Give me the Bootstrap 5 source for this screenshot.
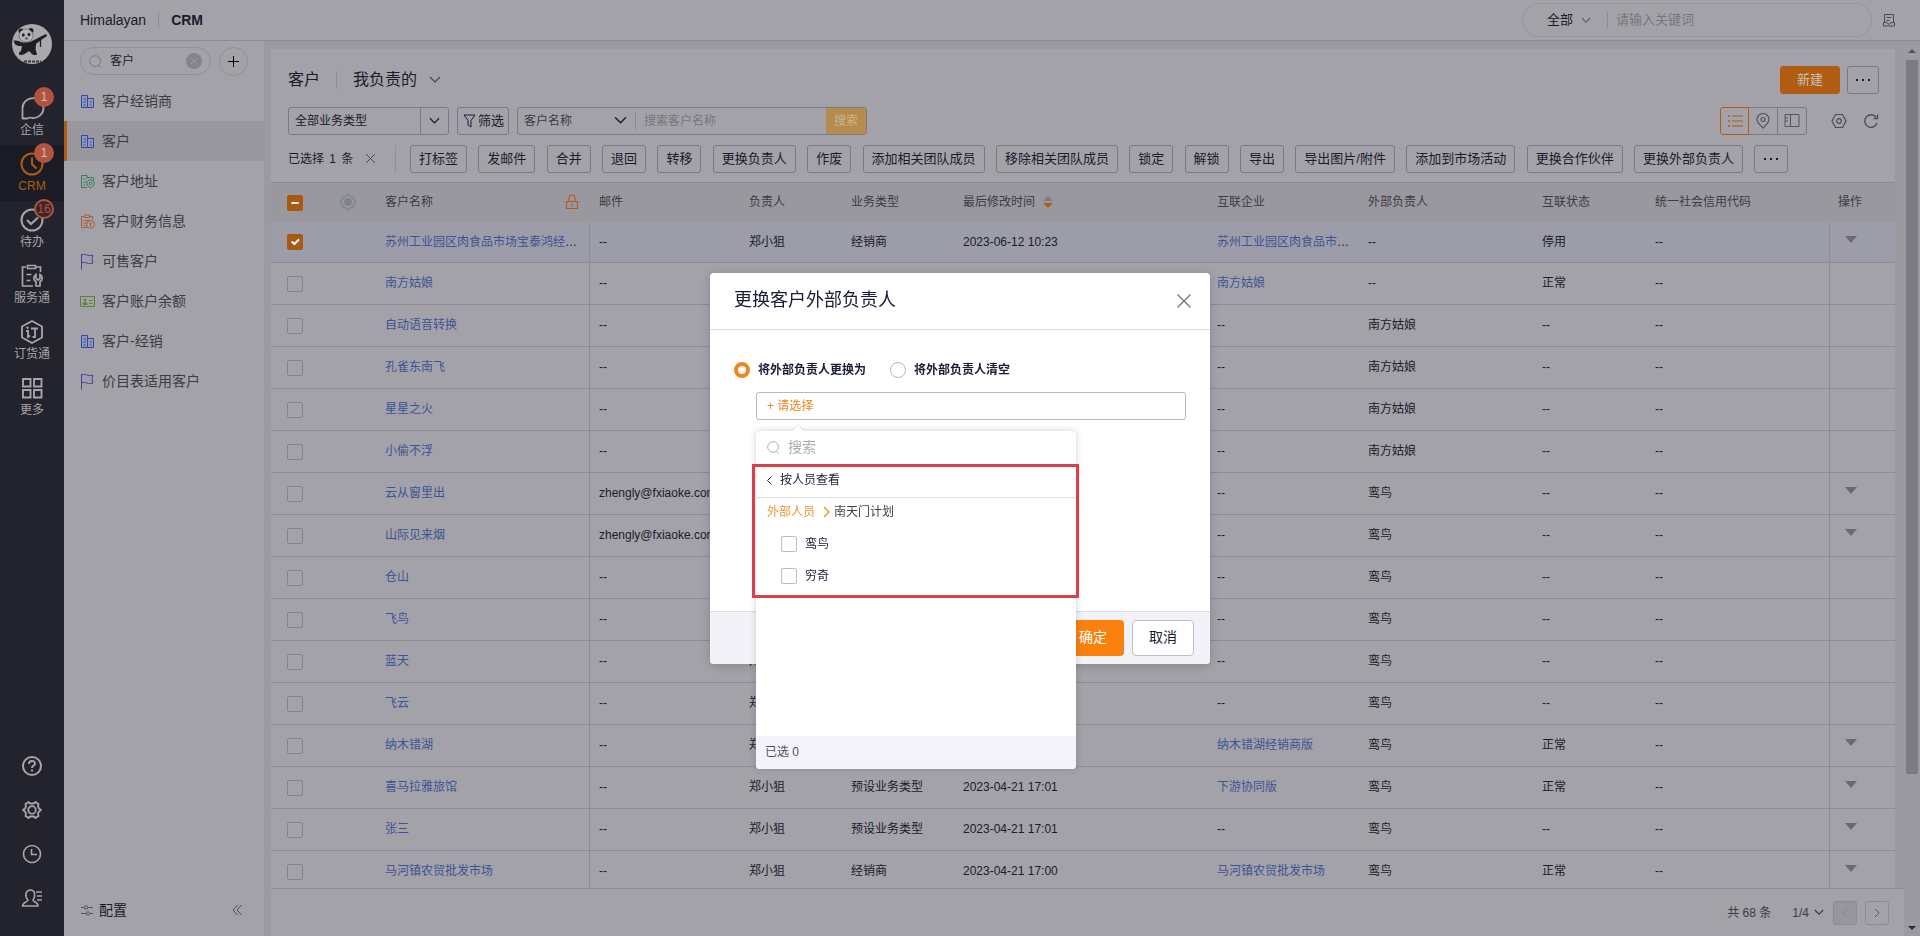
<!DOCTYPE html>
<html lang="zh-CN">
<head>
<meta charset="utf-8">
<meta name="viewport" content="width=device-width, initial-scale=1">
<title>CRM - 客户</title>
<link href="https://cdn.jsdelivr.net/npm/bootstrap@5.3.0/dist/css/bootstrap.min.css" rel="stylesheet">
<style>
:root{--surface:#a3a2a8;--gutter:#9b9aa0;--line:#8d8c93;--edge:#7b7a82;--ink:#1a1b2c;--ink-soft:#3b3b46;--mute:#77767e;--brand:#b05d12;--link:#3c5396;--rail:#22232d;--rail-ink:#a6a6aa}
body{font-family:"Liberation Sans","Noto Sans CJK SC",sans-serif;font-size:12px;line-height:18px;color:var(--ink);background:var(--gutter)}
svg{display:block;fill:none;flex:none}
svg:not([stroke]){stroke:currentColor}
a{text-decoration:none}
button{font-family:inherit}
input::placeholder{color:var(--mute)!important;opacity:1}

/* icon rail */
.rail{width:64px;background:var(--rail);color:var(--rail-ink)}
.rail a{color:inherit}
.rail-item{height:56px;padding-top:6px}
.rail-item.current{background:#1b1b25;color:var(--brand)!important}
.rail-badge{position:absolute;top:-2px;left:34px;min-width:20px;height:20px;border-radius:10px;background:#b2533d;color:#c4c0c0;line-height:20px;text-align:center;font-size:12px}
.rail-badge.ring{background:#3a262c;border:2px solid #b2533d;color:#b2533d;line-height:16px}
.rail-tool{height:44px}

/* header bar */
.topbar{height:41px;background:var(--surface);border-bottom:1px solid var(--line);font-size:14px}
.vline{width:1px;background:var(--line)}
.global-search{width:350px;height:34px;border:1px solid #96959c;border-radius:17px;font-size:13px}
.bare{border:0;background:transparent;outline:0;padding:0;min-width:0;color:var(--ink)}

/* object menu */
.side{width:200px;background:var(--surface);margin-right:7px;font-size:14px}
.side-search{height:28px;border:1px solid #918f97;border-radius:14px;font-size:13px}
.round-btn{width:29px;height:29px;border:1px solid #918f97;border-radius:50%;background:transparent;padding:0}
.side-link{height:40px;padding:0 16px;gap:7px;color:var(--ink-soft)}
.side-link.current{background:#98979d;box-shadow:inset 3px 0 var(--brand)}

/* list page */
.page{background:var(--surface)}
.bar{padding:0 16px 0 17px}
.tool{height:28px;border:1px solid var(--edge);border-radius:3px;background:transparent;color:var(--ink);padding:0 8px;font-size:13px;line-height:26px;white-space:nowrap}
.tool.solid{background:var(--brand);border-color:var(--brand);color:#c8c0b8}
.tool.dots{width:34px;padding:0;vertical-align:top}
.bulk .tool{margin-right:8px}
.combo{height:28px;border:1px solid var(--edge);border-radius:3px}
.combo select{appearance:none}
.search-btn{width:40px;border:0;background:#b58c4b;color:#c9b48f;font-size:12px;border-radius:0 2px 2px 0}
.view{width:29px;height:28px;border:1px solid var(--edge);margin-left:-1px;background:transparent;color:#55545c;padding:0}
.view.current{border-color:var(--brand);color:var(--brand);z-index:1;border-radius:3px 0 0 3px}
.icon-btn{border:0;background:transparent;padding:0;color:#4c4b53}

.grid{table-layout:fixed;width:100%;border-collapse:separate;border-spacing:0}
.grid th{height:40px;background:#99989e;font-weight:400;color:var(--ink-soft);padding:0 0 0 9px;border-top:1px solid var(--line)}
.grid td{height:42px;padding:0 0 0 9px;border-bottom:1px solid var(--line);white-space:nowrap;overflow:hidden;text-overflow:ellipsis}
.grid tr:first-child td{height:41px}
.grid tr.picked td{background:#9c9da8}
.grid td a{color:var(--link)}
.grid .pin{border-right:1px solid var(--line)}
.grid td.act{border-left:1px solid var(--line)}
.grid .mid{padding-left:0;text-align:center}
.caret{display:block;width:0;margin:-5px 0 0 6px;border:6px solid transparent;border-top:7px solid #6b6a72;border-bottom:0}
.tick.form-check-input{width:16px;height:16px;margin:0;border:1px solid #85848b;border-radius:2px;background-color:transparent;box-shadow:none;vertical-align:middle}
.grid .tick:checked,.grid .tick:indeterminate{background-color:var(--brand)!important;border-color:var(--brand)!important;filter:brightness(.96)}
.drop .tick.form-check-input{border-color:#bdbdc4}
.pager{height:48px;background:var(--surface);border-top:1px solid var(--line);color:var(--ink-soft)}
.pager button{width:24px;height:24px;border:1px solid #8b8a91;border-radius:3px;background:transparent;padding:0;color:#5c5b63}
.scroll{width:16px;padding:0 2px}
.scroll-thumb{background:#7c7b81;flex:0 0 714px}

/* dialog */
.swap .modal-dialog{max-width:500px}
.swap .modal-content{border:0;border-radius:4px;box-shadow:0 2px 10px rgba(0,0,0,.18);color:#181c35}
.swap .modal-header{height:57px;padding:0 19px 0 24px;border-bottom:1px solid #dcdce2}
.swap .modal-body{min-height:281px;padding:31px 24px 0}
.swap .modal-footer{height:53px;padding:0 16px;gap:8px;background:#f3f2f8;border-top:1px solid #dcdce2;border-radius:0 0 4px 4px}
.swap .modal-footer .btn{width:62px;height:36px;margin:0;padding:0;font-size:14px;border-radius:4px}
.btn-ok{background:#fa810d;color:#fff}
.btn-no{background:#fff;border:1px solid #bfbdc6;color:#181c35}
.pick.form-check-input{width:16px;height:16px;margin:0;border:1px solid #b5b5bd;box-shadow:none}
.pick.form-check-input:checked{background:#fff;border:4px solid #f08519}
.chooser{width:430px;height:28px;margin:13px 0 0 22px;border:1px solid #b8b8be;border-radius:3px;background:#fff;color:#ec8420;font-size:12px;padding:0 10px}
.drop{position:absolute;top:101px;left:46px;width:320px;height:338px;background:#fff;border-radius:4px;box-shadow:0 0 6px rgba(60,60,80,.25);z-index:5}
.drop::before{content:"";position:absolute;top:-4px;left:38px;width:8px;height:8px;background:#fff;transform:rotate(45deg);box-shadow:-1px -1px 1px rgba(60,60,80,.12)}
.drop-search{height:33px;padding:0 11px;color:#a9a9b2}
.drop-search input::placeholder{color:#a9a9b2!important}
.marked{position:relative;height:134px}
.marked::after{content:"";position:absolute;inset:0 -3px 0 -4px;border:3px solid #d9414a;pointer-events:none}
.back{height:34px;border:0;border-bottom:1px solid #dedee3;background:transparent;padding:0 11px;color:#181c35}
.trail{height:28px;padding:0 11px;margin-bottom:2px}
.person{height:32px;padding:0 25px}
.drop-foot{height:33px;padding:0 9px;background:#f4f3fb;color:#50505e;border-radius:0 0 4px 4px}
</style>
</head>
<body class="vh-100 d-flex overflow-hidden">

<svg class="d-none">
  <symbol id="i-build" viewBox="0 0 15 15"><path fill="#8f98bb" stroke="none" d="M1 1h7v13H1zM8 4h5.500v10H8z"/><path d="M1.500 1.500h6v12h-6zM8 4.500h5.500v9H8M3.500 5h2.500M3.500 8h2.500M3.500 11h2M10 8h1.500M10 11h1.500"/></symbol>
  <symbol id="i-flag" viewBox="0 0 15 17"><path fill="#a09cb5" stroke="none" d="M2 2c4-2 6 2 11 0l-1 4 1 4c-5 2-7-2-11 0z"/><path d="M1.500 1v15.500M1.500 2c4-2 6 2 11.500 0l-1 4 1 4c-5 2-7-2-11.500 0"/></symbol>
  <symbol id="i-down" viewBox="0 0 12 8"><path d="M1 1l5 5 5-5" stroke-width="1.300"/></symbol>
  <symbol id="i-find" viewBox="0 0 14 14"><circle cx="6.500" cy="6.500" r="5.800"/><path d="M10 11l3 2.500"/></symbol>
  <symbol id="i-dots" viewBox="0 0 14 4"><path stroke="none" fill="currentColor" d="M0 1h2v2H0zM6 1h2v2H6zM12 1h2v2h-2z"/></symbol>
</svg>

<nav class="rail d-flex flex-column flex-shrink-0">
  <svg class="mx-auto mb-4" style="margin-top:24px" width="40" height="40" viewBox="0 0 40 40" stroke="none">
    <clipPath id="round"><circle cx="20" cy="20" r="20"/></clipPath>
    <g clip-path="url(#round)"><rect width="40" height="40" fill="#a9a9ab"/>
    <circle cx="9" cy="7" r="2.500" fill="#1e1e24"/><circle cx="19" cy="6.500" r="2.500" fill="#1e1e24"/><ellipse cx="14" cy="11.500" rx="7" ry="6.500" fill="#b6b6b8" stroke="#55555b" stroke-width=".6"/>
    <ellipse cx="11.300" cy="11" rx="1.500" ry="1.800" fill="#25252b"/><ellipse cx="17" cy="10.500" rx="1.500" ry="1.800" fill="#25252b"/><ellipse cx="14.500" cy="14.500" rx="1.800" ry="1.200" fill="#66666c"/>
    <path fill="#1e1e24" d="M1 17c2-1 4 0 6 0 3 2 9 2 13 0 5-2 9-5 14-7l1 2c-4 3-8 5-11 8 0 3-1 5 0 7l1 3c-1 2-4 1-5 0l-3-3c-3 2-5 4-9 4-2-1-1-3 1-4l1-5c-3 0-8 0-8-5z"/><path stroke="#1e1e24" stroke-width="1.300" d="M28.500 15v8"/><path stroke="#3a3a40" stroke-width="2" d="M12 37.500h17" stroke-dasharray="3 1"/></g>
  </svg>
  <a href="#" class="rail-item position-relative d-flex flex-column align-items-center" style="margin-top:1px">
    <svg width="26" height="26" viewBox="0 0 26 26" stroke-width="1.800" stroke="currentColor"><path d="M3.500 23.500V13a10.500 10 0 1 1 9.500 10l-2-.5-3 1z" stroke-linejoin="round"/></svg><span>企信</span><span class="rail-badge">1</span></a>
  <a href="#" class="rail-item current position-relative d-flex flex-column align-items-center">
    <svg width="26" height="26" viewBox="0 0 26 26" stroke-width="2"><circle cx="13" cy="13" r="10.500"/><path d="M13 6.500V13l4.500 4.500"/></svg><span>CRM</span><span class="rail-badge">1</span></a>
  <a href="#" class="rail-item position-relative d-flex flex-column align-items-center">
    <svg width="26" height="26" viewBox="0 0 26 26" stroke-width="2"><circle cx="13" cy="13" r="10.500"/><path d="M8 13l4 4 7-6.500"/></svg><span>待办</span><span class="rail-badge ring">16</span></a>
  <a href="#" class="rail-item d-flex flex-column align-items-center">
    <svg width="26" height="26" viewBox="0 0 26 26" stroke-width="1.700"><path d="M7 4H3.500v19H14M17 4h4.500v5M8.500 2.500h8v3h-8zM7.500 11.500h5M7.500 17.500h4"/><path d="M17 11.500v4l2 1.500 2-1.500v-4c3 2 3 5.500 0 7V23h-4v-4.500c-3-1.500-3-5 0-7z"/></svg><span>服务通</span></a>
  <a href="#" class="rail-item d-flex flex-column align-items-center">
    <svg width="26" height="26" viewBox="0 0 26 26" stroke-width="1.800"><path d="M13 2l10 5.500v11L13 24 3 18.500v-11z"/><path d="M7.500 8l2 1.500M7 12h2v6l2-1.500M12 9.500h7M16 9.500v8.500h-2.500"/></svg><span>订货通</span></a>
  <a href="#" class="rail-item d-flex flex-column align-items-center">
    <svg width="26" height="26" viewBox="0 0 26 26" stroke-width="1.900"><path d="M4 4h7.500v7.500H4zM15 4h7.500v7.500H15zM4 15h7.500v7.500H4zM15 15h7.500v7.500H15z"/></svg><span>更多</span></a>
  <div class="mt-auto mb-3">
    <a href="#" aria-label="帮助" class="rail-tool d-flex align-items-center justify-content-center"><svg width="20" height="20" viewBox="0 0 20 20" stroke-width="2"><circle cx="10" cy="10" r="9"/><path d="M7 8c0-4 6-4 6-.5 0 2-3 2-3 4.500M10 13.500v2"/></svg></a>
    <a href="#" aria-label="设置" class="rail-tool d-flex align-items-center justify-content-center"><svg width="20" height="20" viewBox="0 0 20 20" stroke-width="1.800"><path stroke-linejoin="round" d="M6.500 2l1.500 1.500h4L13.500 2l3 2-.5 2.500 1 2 2 1.500-2 1.500-1 2 .5 2.500-3 2-1.500-1.500H8L6.500 18l-3-2 .5-2.500-1-2L1 10l2-1.500 1-2L3.500 4z"/><circle cx="10" cy="10" r="3.800"/></svg></a>
    <a href="#" aria-label="最近" class="rail-tool d-flex align-items-center justify-content-center"><svg width="20" height="20" viewBox="0 0 20 20" stroke-width="1.600"><circle cx="10" cy="10" r="8.500"/><path d="M9.500 5v5.500H15"/></svg></a>
    <a href="#" aria-label="通讯录" class="rail-tool d-flex align-items-center justify-content-center"><svg width="22" height="20" viewBox="0 0 22 20" stroke-width="1.600"><path d="M7 12C3 8 5 2 9.500 2S15 8 12 12c0 2 5 1.500 5 6H1.500c0-4 5.500-4 5.500-6zM15 4h6M16 8h5M16 12h5"/></svg></a>
  </div>
</nav>

<div class="d-flex flex-column flex-grow-1" style="min-width:0">
  <header class="topbar d-flex align-items-center ps-3 flex-shrink-0">
    <span>Himalayan</span><span class="vline" style="height:14px;margin:0 12px"></span><b>CRM</b>
    <div class="global-search ms-auto d-flex align-items-center ps-4">
      <button class="bare d-flex align-items-center gap-2">全部<svg width="10" height="7" style="color:#66656d"><use href="#i-down"/></svg></button>
      <span class="vline ms-3 me-2" style="height:16px"></span>
      <input class="bare flex-grow-1" placeholder="请输入关键词" aria-label="请输入关键词">
    </div>
    <button class="icon-btn me-4" aria-label="记录" style="margin-left:10px"><svg width="14" height="14" viewBox="0 0 14 14"><path d="M2.500 10V1.500h9V10M4.500 4.500h5M4.500 7.500h3M1.500 9.500v3.500h11V9.500H9l-1 1.500H6L5 9.500z"/></svg></button>
  </header>

  <div class="d-flex flex-grow-1" style="min-height:0">
    <aside class="side d-flex flex-column flex-shrink-0">
      <div class="d-flex align-items-center px-3" style="height:40px">
        <div class="side-search d-flex align-items-center flex-grow-1 ps-2 pe-2 me-2">
          <svg width="13" height="13" style="color:#77767e"><use href="#i-find"/></svg>
          <input class="bare flex-grow-1 ms-2" style="width:60px;font-size:12px" value="客户" aria-label="搜索菜单">
          <button class="bare d-flex align-items-center justify-content-center rounded-circle" aria-label="清除" style="width:16px;height:16px;background:#85848b;color:#98979d"><svg width="8" height="8" viewBox="0 0 8 8"><path d="M1 1l6 6M7 1L1 7"/></svg></button>
        </div>
        <button class="round-btn d-flex align-items-center justify-content-center" aria-label="新增"><svg width="11" height="11" viewBox="0 0 11 11"><path d="M5.500 0v11M0 5.500h11"/></svg></button>
      </div>
      <a href="#" class="side-link d-flex align-items-center"><svg width="15" height="15" style="color:#34499b"><use href="#i-build"/></svg>客户经销商</a>
      <a href="#" class="side-link current d-flex align-items-center"><svg width="15" height="15" style="color:#34499b"><use href="#i-build"/></svg>客户</a>
      <a href="#" class="side-link d-flex align-items-center"><svg width="15" height="15" viewBox="0 0 15 15" style="color:#328159"><path d="M7 13.500H1.500v-12h5.500v3M7 3.500h6.500v3M3.500 5h2M3.500 8h2.500M3.500 11h2"/><path d="M10.500 14L7.500 11.500a3.700 3.700 0 1 1 6 0z"/><circle cx="10.500" cy="9.500" r="1.300"/></svg>客户地址</a>
      <a href="#" class="side-link d-flex align-items-center"><svg width="15" height="15" viewBox="0 0 15 15" style="color:#ad5b36"><path d="M4 2.500H1.500v11h5.500M10 2.500h2.500v3M4.500 1h5v2.500h-5zM3.500 6.500h6M3.500 9h3M3.500 11.500h2"/><circle cx="10.500" cy="10.500" r="3.900"/><path d="M10.500 9v4M9 8.500l1.500 1.500 1.500-1.500"/></svg>客户财务信息</a>
      <a href="#" class="side-link d-flex align-items-center"><svg width="15" height="17" style="color:#4d4585"><use href="#i-flag"/></svg>可售客户</a>
      <a href="#" class="side-link d-flex align-items-center"><svg width="15" height="13" viewBox="0 0 15 13" style="color:#588338"><path d="M.5 1.500h14v10H.5z"/><circle cx="5" cy="5" r="1" fill="currentColor"/><path fill="currentColor" d="M3 9.500c0-3 4-3 4 0z"/><path d="M9 5.500h3.500M9 8.500h3.500"/></svg>客户账户余额</a>
      <a href="#" class="side-link d-flex align-items-center"><svg width="15" height="15" style="color:#34499b"><use href="#i-build"/></svg>客户-经销</a>
      <a href="#" class="side-link d-flex align-items-center"><svg width="15" height="17" style="color:#4d4585"><use href="#i-flag"/></svg>价目表适用客户</a>
      <div class="mt-auto d-flex align-items-center justify-content-between" style="height:52px;padding:0 22px 0 17px">
        <a href="#" class="d-flex align-items-center" style="gap:6px;color:var(--ink)"><svg width="12" height="12" viewBox="0 0 12 12" style="color:#55545c"><path d="M0 3.500h3M6.500 3.500H12M0 9.500h5.500M9 9.500h3"/><circle cx="5" cy="3.500" r="1.700"/><circle cx="7" cy="9.500" r="1.700"/></svg>配置</a>
        <button class="icon-btn" aria-label="收起"><svg width="10" height="12" viewBox="0 0 10 12"><path d="M5.500 1L1 6l4.500 5M9.500 1L5 6l4.500 5"/></svg></button>
      </div>
    </aside>

    <div class="d-flex flex-column flex-grow-1" style="min-width:0">
      <main class="page d-flex flex-column flex-grow-1 mt-2" style="min-height:0;margin-right:9px">
        <div class="bar d-flex align-items-center" style="height:62px">
          <span style="font-size:16px">客户</span><span class="vline mx-3" style="height:18px"></span>
          <button class="bare d-flex align-items-center gap-2" style="font-size:16px">我负责的<svg class="ms-1" width="12" height="8" style="color:#4c4b53"><use href="#i-down"/></svg></button>
          <button class="tool solid ms-auto" style="width:60px;margin-right:7px">新建</button>
          <button class="tool dots d-flex align-items-center justify-content-center" style="width:32px" aria-label="更多操作"><svg width="14" height="4"><use href="#i-dots"/></svg></button>
        </div>
        <div class="bar d-flex mb-2 flex-shrink-0" style="margin-top:-4px">
          <div class="combo d-flex me-2" style="width:161px">
            <select class="bare flex-grow-1" style="padding-left:6px" aria-label="业务类型"><option>全部业务类型</option></select>
            <span class="d-flex align-items-center justify-content-center border-start" style="width:28px;border-color:#7b7a82!important"><svg width="11" height="8"><use href="#i-down"/></svg></span>
          </div>
          <button class="tool me-2 d-flex align-items-center" style="width:52px;padding:0 5px;gap:2px"><svg width="13" height="14" viewBox="0 0 13 14"><path d="M1 1h11L8 6.500V13l-3-2V6.500z"/></svg>筛选</button>
          <div class="combo d-flex" style="width:350px">
            <select class="bare" style="width:96px;padding-left:6px;color:var(--ink-soft)" aria-label="搜索字段"><option>客户名称</option></select>
            <svg class="align-self-center me-2" width="13" height="9"><use href="#i-down"/></svg>
            <span class="vline my-1"></span>
            <input class="bare flex-grow-1 ps-2" placeholder="搜索客户名称" aria-label="搜索客户名称">
            <button class="search-btn">搜索</button>
          </div>
          <div class="d-flex ms-auto align-items-center">
            <button class="view current position-relative d-flex align-items-center justify-content-center" aria-label="列表"><svg width="16" height="14" viewBox="0 0 16 14"><path d="M5 2h11M5 7h11M5 12h11" stroke-width="1.200"/><path d="M1 2h2M1 7h2M1 12h2" stroke-width="1.600"/></svg></button>
            <button class="view d-flex align-items-center justify-content-center" aria-label="地图" style="width:30px"><svg width="14" height="16" viewBox="0 0 14 16" stroke-width="1.200"><path d="M7 15C4 12 1 9.500 1 6.500a6 6 0 0 1 12 0C13 9.500 10 12 7 15z"/><circle cx="7" cy="6.500" r="2"/></svg></button>
            <button class="view d-flex align-items-center justify-content-center" aria-label="分栏" style="width:30px;border-radius:0 3px 3px 0"><svg width="16" height="13" viewBox="0 0 16 13"><path d="M1 .5h14v12H1zM6.500.5v12M1 4h3M1 7h3"/></svg></button>
            <button class="icon-btn ms-4" aria-label="列设置"><svg width="16" height="16" viewBox="0 0 16 16" stroke-width="1.200"><path d="M4.500 1.500h7L15 8l-3.500 6.500h-7L1 8z"/><circle cx="8" cy="8" r="2.300"/></svg></button>
            <button class="icon-btn ms-3" aria-label="刷新"><svg width="16" height="16" viewBox="0 0 16 16" stroke-width="1.300"><path d="M14 10A6.300 6.300 0 1 1 13 4.200M14.500 1.500v4h-4"/></svg></button>
          </div>
        </div>
        <div class="bar d-flex flex-shrink-0" style="height:39px;padding-top:2px">
          <div class="d-flex align-items-center gap-2" style="height:28px;width:108px;margin-right:14px;border-right:1px solid #918f97"><span class="text-nowrap">已选择 <span style="padding:0 2px">1</span> 条</span><button class="icon-btn ms-1" aria-label="取消选择"><svg width="11" height="11" viewBox="0 0 11 11"><path d="M1 1l9 9M10 1l-9 9"/></svg></button></div>
          <div class="bulk text-nowrap">
            <button class="tool">打标签</button>
            <button class="tool">发邮件</button>
            <button class="tool">合并</button>
            <button class="tool">退回</button>
            <button class="tool">转移</button>
            <button class="tool">更换负责人</button>
            <button class="tool">作废</button>
            <button class="tool">添加相关团队成员</button>
            <button class="tool">移除相关团队成员</button>
            <button class="tool">锁定</button>
            <button class="tool">解锁</button>
            <button class="tool">导出</button>
            <button class="tool">导出图片/附件</button>
            <button class="tool">添加到市场活动</button>
            <button class="tool">更换合作伙伴</button>
            <button class="tool">更换外部负责人</button>
            <button class="tool dots" aria-label="更多"><svg class="mx-auto" width="14" height="4"><use href="#i-dots"/></svg></button>
          </div>
        </div>
        <div class="flex-grow-1 overflow-hidden" style="min-height:0">
          <table class="grid">
            <colgroup><col style="width:48px"><col style="width:57px"><col style="width:214px"><col style="width:150px"><col style="width:102px"><col style="width:112px"><col><col style="width:151px"><col style="width:174px"><col style="width:113px"><col style="width:183px"><col style="width:66px"></colgroup>
            <thead><tr>
              <th class="mid"><input type="checkbox" class="form-check-input tick" id="all" aria-label="全选"></th>
              <th class="mid"><svg class="mx-auto" width="16" height="18" viewBox="0 0 16 18" style="color:#7c8488"><path d="M8 1l3 2.500C14 5 15 7 15 9s-1 4-4 5.500L8 17l-3-2.500C2 13 1 11 1 9s1-4 4-5.500z" stroke-width="1.300"/><circle cx="8" cy="9" r="3.500" fill="currentColor"/></svg></th>
              <th><span class="d-flex align-items-center justify-content-between">客户名称<svg width="14" height="16" viewBox="0 0 14 16" style="color:#b05a28;margin-right:11px"><path d="M1.500 7.500h11v7h-11zM4 7V4a3 3 0 0 1 6 0v3M7 9.500v3" stroke-width="1.200"/></svg></span></th>
              <th>邮件</th><th>负责人</th><th>业务类型</th>
              <th><span class="d-flex align-items-center">最后修改时间<svg class="ms-2" width="10" height="12" viewBox="0 0 10 12" stroke="none"><path fill="#7c7b82" d="M5 0l5 5H0z"/><path fill="#b05d12" d="M5 12l5-5H0z"/></svg></span></th>
              <th>互联企业</th><th>外部负责人</th><th>互联状态</th><th>统一社会信用代码</th><th>操作</th>
            </tr></thead>
            <tbody id="rows"></tbody>
          </table>
        </div>
      </main>
      <footer class="pager d-flex align-items-center justify-content-end flex-shrink-0" style="padding-right:15px">
        <span>共 68 条</span>
        <button class="bare d-flex align-items-center border-0 w-auto" style="gap:5px;margin:0 9px 0 21px;color:var(--ink-soft)">1/4<svg width="10" height="7"><use href="#i-down"/></svg></button>
        <button class="d-flex align-items-center justify-content-center me-2" aria-label="上一页" style="background:#97969d;color:#85848b"><svg width="6" height="10" viewBox="0 0 6 10"><path d="M5 1L1 5l4 4"/></svg></button>
        <button class="d-flex align-items-center justify-content-center" aria-label="下一页"><svg width="6" height="10" viewBox="0 0 6 10"><path d="M1 1l4 4-4 4"/></svg></button>
      </footer>
    </div>
    <div class="scroll d-flex flex-column flex-shrink-0 align-items-stretch">
      <svg class="mx-auto" width="8" height="19" viewBox="0 0 8 19" stroke="none"><path fill="#55545c" d="M4 8l4 4H0z"/></svg>
      <div class="scroll-thumb"></div>
      <svg class="mx-auto mt-auto" width="8" height="14" viewBox="0 0 8 14" stroke="none"><path fill="#2a2a33" d="M4 8l4-4H0z"/></svg>
    </div>
  </div>
</div>

<div class="modal swap show d-block" tabindex="-1" role="dialog" aria-labelledby="swapTitle">
  <div class="modal-dialog modal-dialog-centered my-0 min-vh-100">
    <div class="modal-content">
      <div class="modal-header">
        <h2 class="modal-title fw-normal" id="swapTitle" style="font-size:18px">更换客户外部负责人</h2>
        <button class="icon-btn" aria-label="关闭" style="color:#75757d"><svg width="14" height="14" viewBox="0 0 14 14" stroke-width="1.300"><path d="M.5.500l13 13M13.500.500l-13 13"/></svg></button>
      </div>
      <div class="modal-body">
        <div class="d-flex align-items-center" style="height:18px">
          <input class="form-check-input pick" type="radio" name="mode" id="mode1" checked><label for="mode1" class="ps-2 pe-4 fw-bold">将外部负责人更换为</label>
          <input class="form-check-input pick" type="radio" name="mode" id="mode2"><label for="mode2" class="ps-2 fw-bold">将外部负责人清空</label>
        </div>
        <button class="chooser d-block text-start">+ 请选择</button>
        <div class="drop d-flex flex-column">
          <div class="drop-search d-flex align-items-center gap-2"><svg width="13" height="13"><use href="#i-find"/></svg><input class="bare flex-grow-1" style="font-size:14px" placeholder="搜索" aria-label="搜索"></div>
          <div class="marked">
            <button class="back d-flex align-items-center gap-2 w-100"><svg width="5" height="9" viewBox="0 0 5 9"><path d="M4.500.500l-4 4 4 4"/></svg>按人员查看</button>
            <div class="trail d-flex align-items-center"><a href="#" style="color:#ec9434">外部人员</a><svg class="ms-2 me-1" width="7" height="12" viewBox="0 0 7 12" stroke-width="1.500" style="color:#ec9434"><path d="M1 1l5 5-5 5"/></svg><span style="color:#40404c">南天门计划</span></div>
            <div class="person d-flex align-items-center gap-2"><input type="checkbox" class="form-check-input tick" id="p1"><label for="p1">鸾鸟</label></div>
            <div class="person d-flex align-items-center gap-2"><input type="checkbox" class="form-check-input tick" id="p2"><label for="p2">穷奇</label></div>
          </div>
          <div class="drop-foot mt-auto d-flex align-items-center">已选 0</div>
        </div>
      </div>
      <div class="modal-footer"><button class="btn btn-ok">确定</button><button class="btn btn-no">取消</button></div>
    </div>
  </div>
</div>

<script>
// name, type, modified, partner, external owner, status, has action menu, e-mail
const preset = '预设业务类型', t = '2023-04-21 17:01', mail = 'zhengly@fxiaoke.com';
const data = [
  ['苏州工业园区肉食品市场宝泰鸿经销商', '经销商', '2023-06-12 10:23', '苏州工业园区肉食品市场宝泰鸿经销商', '--', '停用', 1],
  ['南方姑娘', preset, t, '南方姑娘', '--', '正常', 0],
  ['自动语音转换', preset, t, '--', '南方姑娘', '--', 0],
  ['孔雀东南飞', preset, t, '--', '南方姑娘', '--', 0],
  ['星星之火', preset, t, '--', '南方姑娘', '--', 0],
  ['小偷不浮', preset, t, '--', '南方姑娘', '--', 0],
  ['云从窗里出', preset, t, '--', '鸾鸟', '--', 1, mail],
  ['山际见来烟', preset, t, '--', '鸾鸟', '--', 1, mail],
  ['仓山', preset, t, '--', '鸾鸟', '--', 0],
  ['飞鸟', preset, t, '--', '鸾鸟', '--', 0],
  ['蓝天', preset, t, '--', '鸾鸟', '--', 0],
  ['飞云', preset, t, '--', '鸾鸟', '--', 0],
  ['纳木错湖', preset, t, '纳木错湖经销商版', '鸾鸟', '正常', 1],
  ['喜马拉雅旅馆', preset, t, '下游协同版', '鸾鸟', '正常', 1],
  ['张三', preset, t, '--', '鸾鸟', '--', 1],
  ['马河镇农贸批发市场', '经销商', '2023-04-21 17:00', '马河镇农贸批发市场', '鸾鸟', '正常', 1]
];
document.getElementById('rows').innerHTML = data.map((r, i) => `<tr class="${i ? '' : 'picked'}">
  <td class="mid"><input type="checkbox" class="form-check-input tick" aria-label="${r[0]}" ${i ? '' : 'checked'}></td><td></td>
  <td class="pin" style="padding-right:8px"><div class="text-truncate"><a href="#">${r[0]}</a></div></td><td>${r[7] || '--'}</td><td>郑小狙</td><td>${r[1]}</td><td>${r[2]}</td>
  <td style="padding-right:8px"><div class="text-truncate">${r[3] === '--' ? '--' : `<a href="#">${r[3]}</a>`}</div></td>
  <td>${r[4]}</td><td>${r[5]}</td><td>--</td><td class="act">${r[6] ? '<span class="caret"></span>' : ''}</td></tr>`).join('');
document.getElementById('all').indeterminate = true;
</script>
<script src="https://cdn.jsdelivr.net/npm/bootstrap@5.3.0/dist/js/bootstrap.bundle.min.js"></script>
</body>
</html>
